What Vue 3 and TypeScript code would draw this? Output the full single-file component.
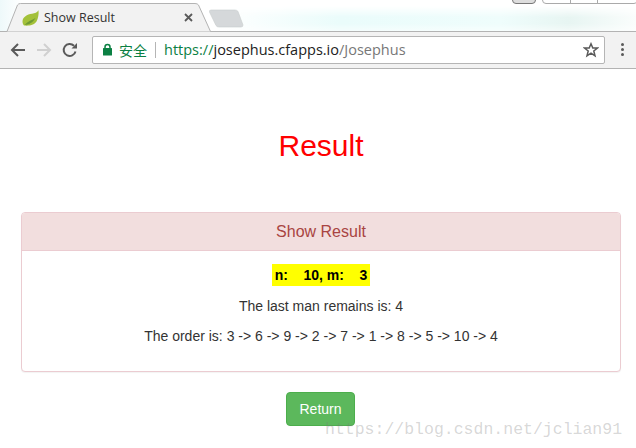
<script setup lang="ts">
const order = [3, 6, 9, 2, 7, 1, 8, 5, 10, 4]
const orderText = order.join(' -> ')
</script>

<template>
  <div class="window">
    <header class="tabstrip">
      <div class="sky" />
      <div class="caption">
        <span class="cap-min" />
        <span class="cap-box" />
      </div>
      <svg class="tab-shape" width="250" height="33" viewBox="0 0 250 33">
        <path d="M0 31.500H7L17.500 5Q18.500 3.500 20.500 3.500H195Q197.500 3.500 198.500 5L210.500 31.500" fill="#f2f2f2" stroke="#b3b3b3" />
        <path d="M211 10H235Q237 10 238 11.500L243 25Q243 27 241 27H219Q217 27 216 25.500L209.500 12Q209 10 211 10Z" fill="#d5d8da" stroke="#c8cccd" stroke-width=".6" />
      </svg>
      <div class="tab">
        <svg class="leaf" width="17" height="16" viewBox="0 0 17 16">
          <path d="M16.500 .3C15 2.500 13 3.300 10 3.800 5 4.500 .8 7 .5 11.200c0 2 .7 3.400 1.500 4.300C6 16 12 15.500 14.500 11.500 16.200 8.500 17 4 16.500 .3Z" fill="#a3c139" />
          <path d="M2.500 15C6 11 10 10 13.500 8 11 12.500 7 14.800 2.500 15Z" fill="#6f9a33" />
        </svg>
        <span class="tab-title">Show Result</span>
        <svg class="tab-close" width="9" height="9" viewBox="0 0 9 9">
          <path d="M1 1 8 8M8 1 1 8" stroke="#5a5a5a" stroke-width="1.800" />
        </svg>
      </div>
    </header>

    <nav class="toolbar">
      <svg class="nav-icon" width="16" height="16" viewBox="0 0 16 16">
        <path d="M15 8H2M8 2 2 8l6 6" fill="none" stroke="#5a5a5a" stroke-width="2" />
      </svg>
      <svg class="nav-icon" width="16" height="16" viewBox="0 0 16 16">
        <path d="M1 8h13M8 2l6 6-6 6" fill="none" stroke="#d0d0d0" stroke-width="2" />
      </svg>
      <svg class="nav-icon" width="16" height="16" viewBox="0 0 16 16">
        <path d="M13.500 9.500A6 6 0 1 1 12 3.800" fill="none" stroke="#5a5a5a" stroke-width="2" />
        <path d="M9.500 6.500H15V1Z" fill="#5a5a5a" />
      </svg>
      <div class="omnibox">
        <svg class="lock" width="11" height="13" viewBox="0 0 11 13">
          <path d="M3 6V4a2.500 2.500 0 0 1 5 0v2" fill="none" stroke="#0b8043" stroke-width="1.500" />
          <rect x="1" y="5" width="9" height="7.500" rx=".5" fill="#0b8043" />
        </svg>
        <span class="secure">安全</span>
        <span class="divider" />
        <span class="url"><span class="scheme">https://</span><span class="host">josephus.cfapps.io</span><span class="path">/Josephus</span></span>
        <svg class="star" width="16" height="16" viewBox="0 0 16 16">
          <path d="M8 1.800 9.800 6H14.500L10.800 9 12 13.800 8 11.200 4 13.800 5.200 9 1.500 6H6.200Z" fill="none" stroke="#5a5a5a" stroke-width="1.500" />
        </svg>
      </div>
      <div class="menu"><i /><i /><i /></div>
    </nav>

    <main class="page">
      <h1 class="title">Result</h1>
      <section class="panel">
        <div class="panel-heading">Show Result</div>
        <div class="panel-body">
          <p class="args"><mark>n:&nbsp;&nbsp;&nbsp;&nbsp;10, m:&nbsp;&nbsp;&nbsp;&nbsp;3</mark></p>
          <p>The last man remains is: 4</p>
          <p>The order is: {{ orderText }}</p>
        </div>
      </section>
      <div class="actions">
        <button class="btn" type="button">Return</button>
      </div>
    </main>

    <span class="watermark">https://blog.csdn.net/jclian91</span>
  </div>
</template>

<style>
html, body {
  margin: 0;
  background: #fff;
}
</style>

<style scoped>
.window {
  position: relative;
  width: 636px;
  height: 448px;
  overflow: hidden;
  font-family: "Liberation Sans", Arial, sans-serif;
  color: #333;
  background: #fff;
}

.tabstrip {
  position: relative;
  height: 32px;
  box-sizing: border-box;
  border-bottom: 1px solid #b3b3b3;
  background: linear-gradient(90deg, #eef9fa 0, #fff 22px);
}

.sky {
  position: absolute;
  left: 215px;
  right: 0;
  top: 6px;
  height: 25px;
  background: linear-gradient(90deg, #fff 0%, #eafcfb 30%, #effdfc 68%, #e7f5f2 84%, #fafdfc 100%);
  -webkit-mask-image: linear-gradient(180deg, transparent 0, #000 45%, #000 70%, rgba(0, 0, 0, 0.5) 100%);
  mask-image: linear-gradient(180deg, transparent 0, #000 45%, #000 70%, rgba(0, 0, 0, 0.5) 100%);
}

.caption {
  position: absolute;
  top: -1px;
  right: -2px;
  display: flex;
  gap: 6px;
}

.cap-min {
  width: 22px;
  height: 3px;
  border: 1px solid #777;
  border-radius: 0 0 4px 4px;
  background: #ddd;
}

.cap-box {
  width: 94px;
  height: 3px;
  border: 1px solid #aaa;
  border-radius: 0 0 4px 4px;
  background: linear-gradient(90deg, transparent 27px, #aaa 27px, #aaa 28px, transparent 28px, transparent 54px, #aaa 54px, #aaa 55px, transparent 55px);
}

.tab-shape {
  position: absolute;
  left: 0;
  top: 0;
}

.tab {
  position: absolute;
  left: 22px;
  top: 9px;
  width: 171px;
  height: 16px;
  display: flex;
  align-items: center;
}

.leaf {
  flex: none;
  margin-top: 2px;
}

.tab-title {
  margin-left: 5px;
  flex: 1;
  font: 12.5px "Open Sans", "Noto Sans", sans-serif;
  color: #333;
}

.tab-close {
  flex: none;
  margin-top: 1px;
}

.toolbar {
  height: 37px;
  box-sizing: border-box;
  padding: 3px 0 4px 10px;
  display: flex;
  align-items: center;
  gap: 10px;
  background: #f2f2f2;
  border-bottom: 1px solid #b3b3b3;
}

.nav-icon {
  flex: none;
}

.omnibox {
  flex: none;
  width: 513px;
  height: 28px;
  margin-left: 4px;
  box-sizing: border-box;
  display: flex;
  align-items: center;
  padding: 0 5px 0 9px;
  background: #fff;
  border: 1px solid #b5b5b5;
  border-radius: 2px;
}

.lock {
  flex: none;
}

.secure {
  margin-left: 6px;
  font: 14px "Noto Sans CJK SC", sans-serif;
  color: #0b8043;
}

.divider {
  width: 1px;
  height: 16px;
  margin: 0 8px 0 8px;
  background: #b5b5b5;
}

.url {
  flex: 1;
  font: 14.5px "Open Sans", "Noto Sans", sans-serif;
  white-space: nowrap;
}

.scheme {
  color: #0b8043;
}

.host {
  color: #222;
}

.path {
  color: #777;
}

.star {
  flex: none;
}

.menu {
  display: flex;
  flex-direction: column;
  gap: 2px;
  margin-left: 6px;
}

.menu i {
  width: 3px;
  height: 3px;
  border-radius: 50%;
  background: #5a5a5a;
}

.page {
  padding: 0 15px 0 21px;
  font-size: 14px;
  line-height: 20px;
  text-align: center;
}

.title {
  margin: 60px 0 50px;
  font-size: 30px;
  font-weight: 400;
  line-height: 33px;
  color: #f00;
}

.panel {
  box-sizing: border-box;
  width: 600px;
  margin: 0 0 20px;
  background: #fff;
  border: 1px solid #ebccd1;
  border-radius: 4px;
  box-shadow: 0 1px 1px rgba(0, 0, 0, 0.05);
}

.panel-heading {
  padding: 10px 15px;
  font-size: 16px;
  line-height: 17px;
  color: #a94442;
  background: #f2dede;
  border-bottom: 1px solid #ebccd1;
  border-radius: 3px 3px 0 0;
}

.panel-body {
  height: 120px;
  box-sizing: border-box;
  padding: 13px 15px;
}

.panel-body p {
  margin: 0 0 10px;
}

.args {
  font-weight: 700;
  color: #000;
}

.args mark {
  display: inline-block;
  padding: 0 3px;
  background: #ff0;
  color: #000;
  line-height: 22px;
}

.actions {
  display: flex;
  justify-content: center;
  padding-right: 1px;
}

.btn {
  width: 69px;
  height: 34px;
  padding: 0;
  font: 14px "Liberation Sans", Arial, sans-serif;
  color: #fff;
  background: #5cb85c;
  border: 1px solid #4cae4c;
  border-radius: 4px;
}

.watermark {
  position: absolute;
  left: 325px;
  top: 420px;
  font: 16.5px "Liberation Mono", "DejaVu Sans Mono", monospace;
  color: rgba(120, 120, 120, 0.3);
  white-space: nowrap;
}
</style>
